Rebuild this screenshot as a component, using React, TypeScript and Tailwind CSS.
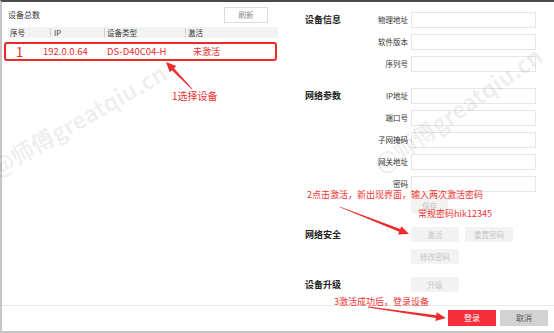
import React from "react";

const font = { fontFamily: '"Noto Sans CJK SC", "Noto Sans", sans-serif' };

type Pt = [number, number];

// tapered red arrow, tail -> tip
const arrowPoints = (tail: Pt, tip: Pt) => {
  const [x1, y1] = tail;
  const [x2, y2] = tip;
  const len = Math.hypot(x2 - x1, y2 - y1);
  const ux = (x2 - x1) / len;
  const uy = (y2 - y1) / len;
  const nx = -uy;
  const ny = ux;
  const headLen = 10;
  const bx = x2 - ux * headLen;
  const by = y2 - uy * headLen;
  const shaft = [
    [x1 + nx * 0.4, y1 + ny * 0.4],
    [bx + nx * 1.4, by + ny * 1.4],
    [bx + nx * 4.5, by + ny * 4.5],
    [x2, y2],
    [bx - nx * 4.5, by - ny * 4.5],
    [bx - nx * 1.4, by - ny * 1.4],
    [x1 - nx * 0.4, y1 - ny * 0.4],
  ];
  return shaft.map((p) => p.join(",")).join(" ");
};

const Field = ({ title, label }: { title?: string; label: string }) => (
  <div className="flex items-center h-[16px]">
    <div className="w-[60px] text-[9px] font-bold text-[#222]">{title}</div>
    <div className="w-[44px] text-right text-[7.5px] text-[#333] pr-[1px] whitespace-nowrap">{label}</div>
    <div className="ml-[2px] w-[125px] h-[16px] border border-[#e6e6e6] bg-white" />
  </div>
);

const GhostBtn = ({ text, w = "w-[48px]" }: { text: string; w?: string }) => (
  <div className={`${w} h-[15px] bg-[#f3f3f3] text-[7.5px] text-[#c6c6c6] flex items-center justify-center`}>
    {text}
  </div>
);

const BtnRow = ({ title, children }: { title?: string; children: React.ReactNode }) => (
  <div className="flex items-center h-[15px]">
    <div className="w-[60px] text-[9px] font-bold text-[#222]">{title}</div>
    <div className="w-[46px]" />
    <div className="flex gap-[6px]">{children}</div>
  </div>
);

export default function App() {
  return (
    <div className="relative w-[554px] h-[333px] overflow-hidden bg-white" style={font}>
      <div className="w-full h-full flex flex-col border-t-2 border-t-[#4a4a4a] border-l-2 border-l-[#c6c6c6] border-b-2 border-b-[#c6c6c6]">
        <div className="flex h-[303px]">
          {/* left: device list */}
          <div className="w-[278px] flex flex-col">
            <div className="mt-[5px] h-[16px] flex items-center justify-between pl-[6px] pr-[12px]">
              <span className="text-[8px] text-[#333]">设备总数</span>
              <div className="w-[44px] h-[16px] border border-[#dcdcdc] text-[7.5px] text-[#888] flex items-center justify-center">
                刷新
              </div>
            </div>
            <div className="mt-[4px] ml-[6px] mr-[2px] h-[11px] bg-[#f3f3f3] flex items-center text-[7.5px] text-[#333]">
              <div className="w-[42px] pl-[2px] flex items-start">
                序号<span className="text-[5px] text-[#999] ml-[4px] -mt-[4px]">˄</span>
              </div>
              <div className="w-[54px] border-l border-[#cfcfcf] pl-[3px] leading-[9px]">IP</div>
              <div className="w-[81px] border-l border-[#cfcfcf] pl-[2px] leading-[9px]">设备类型</div>
              <div className="flex-1 border-l border-[#cfcfcf] pl-[2px] leading-[9px]">激活</div>
            </div>
            <div className="mt-[4px] ml-[2px] w-[273px] h-[19px] border-2 border-[#ea2a2d] rounded-[3px] flex items-center text-[#ea2a2d]">
              <span className="w-[37px] pl-[10px] text-[13px] leading-none">1</span>
              <span className="w-[64px] text-[9.5px]">192.0.0.64</span>
              <span className="w-[86px] text-[9.5px]">DS-D40C04-H</span>
              <span className="text-[9px]">未激活</span>
            </div>
          </div>

          {/* right: device details */}
          <div className="flex-1 flex flex-col pl-[25px] pt-[10px]">
            <Field title="设备信息" label="物理地址" />
            <div className="mt-[6px]"><Field label="软件版本" /></div>
            <div className="mt-[6px]"><Field label="序列号" /></div>
            <div className="mt-[16px]"><Field title="网络参数" label="IP地址" /></div>
            <div className="mt-[6px]"><Field label="端口号" /></div>
            <div className="mt-[6px]"><Field label="子网掩码" /></div>
            <div className="mt-[6px]"><Field label="网关地址" /></div>
            <div className="mt-[6px]"><Field label="密码" /></div>
            <div className="mt-[6px]">
              <BtnRow>
                <GhostBtn text="保存" w="w-[37px]" />
              </BtnRow>
            </div>
            <div className="mt-[14px]">
              <BtnRow title="网络安全">
                <GhostBtn text="激活" />
                <GhostBtn text="重置密码" />
              </BtnRow>
            </div>
            <div className="mt-[7px]">
              <BtnRow>
                <GhostBtn text="修改密码" />
              </BtnRow>
            </div>
            <div className="mt-[13px]">
              <BtnRow title="设备升级">
                <GhostBtn text="升级" />
              </BtnRow>
            </div>
          </div>
        </div>

        {/* footer */}
        <div className="flex-1 border-t border-[#e8e8e8] flex justify-end items-start pt-[4px] pr-[6px] gap-[4px]">
          <div className="w-[48px] h-[16px] bg-[#f5303c] text-white text-[8px] flex items-center justify-center">登录</div>
          <div className="w-[48px] h-[16px] bg-[#d2d2d2] text-[#555] text-[8px] flex items-center justify-center">取消</div>
        </div>
      </div>

      {/* watermarks */}
      <span className="absolute left-[-8px] top-[158px] origin-left -rotate-[30deg] text-[23px] leading-[22px] font-bold text-black/[0.08] whitespace-nowrap pointer-events-none">
        @师傅greatqiu.cn
      </span>
      <span className="absolute left-[376px] top-[155px] origin-left -rotate-[35deg] text-[23px] leading-[22px] font-bold text-black/[0.08] whitespace-nowrap pointer-events-none">
        @师傅greatqiu.cn
      </span>

      {/* annotations */}
      <span className="absolute left-[172px] top-[89px] text-[10px] leading-[14px] text-[#f0312e]">1选择设备</span>
      <span className="absolute left-[307px] top-[189px] text-[9px] leading-[12px] text-[#f0312e] whitespace-nowrap">
        2点击激活，新出现界面，输入两次激活密码
      </span>
      <span className="absolute left-[418px] top-[208px] text-[9px] leading-[12px] text-[#f0312e] whitespace-nowrap">
        常规密码hik12345
      </span>
      <span className="absolute left-[334px] top-[296px] text-[9px] leading-[12px] text-[#f0312e] whitespace-nowrap">
        3激活成功后，登录设备
      </span>

      <svg className="absolute left-0 top-0 pointer-events-none" width="554" height="333" viewBox="0 0 554 333">
        <polygon points={arrowPoints([192, 89], [166, 62])} fill="#ee2b2b" />
        <polygon points={arrowPoints([340, 207], [409, 234])} fill="#ee2b2b" />
        <polygon points={arrowPoints([368, 307], [446, 318])} fill="#ee2b2b" />
      </svg>
    </div>
  );
}
